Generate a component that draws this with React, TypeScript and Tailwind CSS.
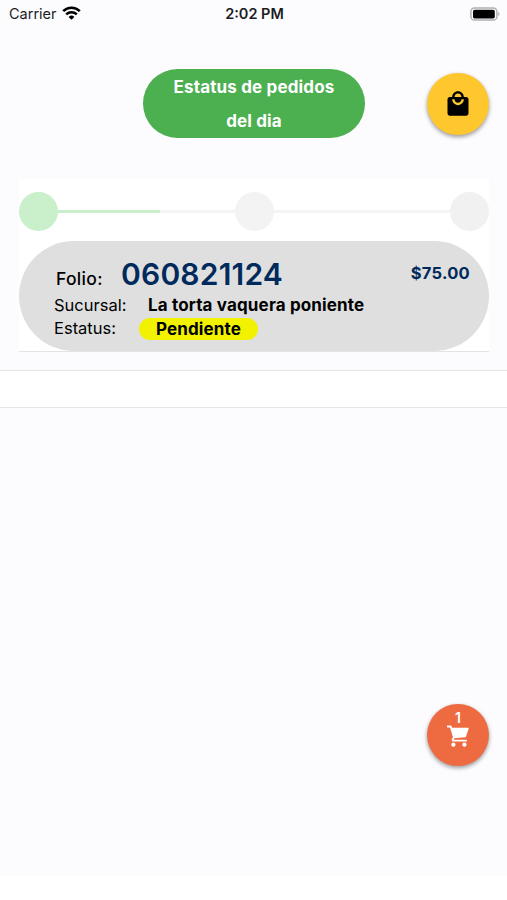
import clsx from "clsx";
import type { ReactNode } from "react";
import { MdLocalMall } from "react-icons/md";

function StatusBar() {
  return (
    <div className="grid h-7 grid-cols-3 items-center pl-[9px] pr-[7px] text-[14.5px] leading-7 text-[#1c1c1e]">
      <div className="flex items-center gap-[5px]">
        <span>Carrier</span>
        <svg className="mb-[2px]" width="19" height="14" viewBox="0 0 19 14" fill="none">
          <path d="M1.2 5.2a11.8 11.8 0 0 1 16.6 0" stroke="#000" strokeWidth="2.6" />
          <path d="M4.2 8.4a7.6 7.6 0 0 1 10.6 0" stroke="#000" strokeWidth="2.4" />
          <path d="M9.5 13.8 6.6 10.9a4.1 4.1 0 0 1 5.8 0Z" fill="#000" />
        </svg>
      </div>
      <p className="text-center font-semibold">2:02 PM</p>
      <svg className="justify-self-end" width="30" height="14" viewBox="0 0 30 14">
        <rect x="0.9" y="0.9" width="26" height="12.2" rx="3.6" fill="#fff" stroke="#b0b0b2" strokeWidth="1.5" />
        <rect x="3" y="2.8" width="21.8" height="8.6" rx="1.6" fill="#000" />
        <path d="M28.2 4.9c1.8.7 1.8 3.5 0 4.2Z" fill="#b0b0b2" />
      </svg>
    </div>
  );
}

function CartIcon() {
  return (
    <svg width="22" height="23" viewBox="0 0 22 23" fill="none">
      <path
        d="M0.6 1.5h3.1l3.2 10.8-1.1 1.8c-.5.9 0 1.6.9 1.6h12.4"
        stroke="currentColor"
        strokeWidth="1.8"
        strokeLinecap="round"
        strokeLinejoin="round"
      />
      <path d="M4 2.7h17.2c.4 0 .6.3.5.7l-2.6 7.8c-.2.6-.5.9-1.1 1L6.7 13.2Z" fill="currentColor" />
      <circle cx="6.4" cy="19.7" r="2.1" fill="currentColor" />
      <circle cx="17.4" cy="19.7" r="2.1" fill="currentColor" />
    </svg>
  );
}

function Fab({ className, children }: { className: string; children: ReactNode }) {
  return (
    <button
      className={clsx(
        "flex h-[62px] w-[62px] flex-col items-center rounded-full shadow-[0_2px_4px_rgba(0,0,0,0.4)]",
        className
      )}
    >
      {children}
    </button>
  );
}

function Stepper() {
  return (
    <div className="flex h-[40px] items-center">
      <div className="h-[39px] w-[39px] rounded-full bg-[#c9efcb]" />
      <div className="mt-px h-[2.5px] flex-1 bg-[#f4f4f4]">
        <div className="h-full w-[102px] bg-[#c9efcb]" />
      </div>
      <div className="h-[39px] w-[39px] rounded-full bg-[#f3f3f3]" />
      <div className="mt-px h-[2.5px] flex-1 bg-[#f4f4f4]" />
      <div className="h-[39px] w-[39px] rounded-full bg-[#f1f1f1]" />
    </div>
  );
}

function OrderCard() {
  return (
    <div className="ml-[19px] mr-[18px] mt-[41px] border-b border-[#e4e4e6] bg-white pt-3">
      <Stepper />
      <div className="mt-[10px] h-[110px] rounded-[55px] bg-[#dfdfdf] pl-[35px] pr-[19px] pt-[15px] text-[16.5px] text-black">
        <div className="flex h-[38px] items-baseline pl-[2px]">
          <span className="w-[65px] pb-px text-[17.5px] font-medium tracking-[0.3px]">Folio:</span>
          <span className="text-[30px] font-semibold leading-9 tracking-[0.2px] text-[#002a5c]">060821124</span>
          <span className="ml-auto self-start text-[16.5px] font-bold leading-[34px] tracking-[0.25px] text-[#002a5c]">
            $75.00
          </span>
        </div>
        <div className="flex h-[23px] items-center">
          <span className="w-[94px]">Sucursal:</span>
          <span className="text-[17px] font-bold tracking-[0.15px]">La torta vaquera poniente</span>
        </div>
        <div className="flex h-[23px] items-center">
          <span className="w-[85px]">Estatus:</span>
          <span className="h-[22px] w-[119px] rounded-full bg-[#f2f200] text-center text-[17px] font-bold leading-[22px] tracking-[0.15px]">
            Pendiente
          </span>
        </div>
      </div>
    </div>
  );
}

export default function App() {
  return (
    <div className="relative h-[900px] w-[507px] overflow-hidden bg-white font-['Inter','Liberation_Sans',sans-serif]">
      <div className="h-[876px] bg-[#fcfcff]">
        <StatusBar />
        <div className="mt-[41px] flex h-[69px] items-center justify-between pl-[143px] pr-[18px]">
          <div className="h-[69px] w-[222px] rounded-full bg-[#4caf50] px-6 pt-px text-center text-[17px] font-bold leading-[34px] tracking-[0.15px] text-white">
            Estatus de pedidos
            <br />
            del dia
          </div>
          <Fab className="justify-center bg-[#fec72e] text-black">
            <MdLocalMall size={28} />
          </Fab>
        </div>
        <OrderCard />
        <div className="mt-[18px] h-[38px] border-y border-[#e6e6e9] bg-white" />
      </div>

      <div className="absolute left-[427px] top-[704px]">
        <Fab className="bg-[#ee6b42] pt-[6px] text-white">
          <span className="text-[14px] font-semibold leading-[15px]">1</span>
          <CartIcon />
        </Fab>
      </div>
    </div>
  );
}
